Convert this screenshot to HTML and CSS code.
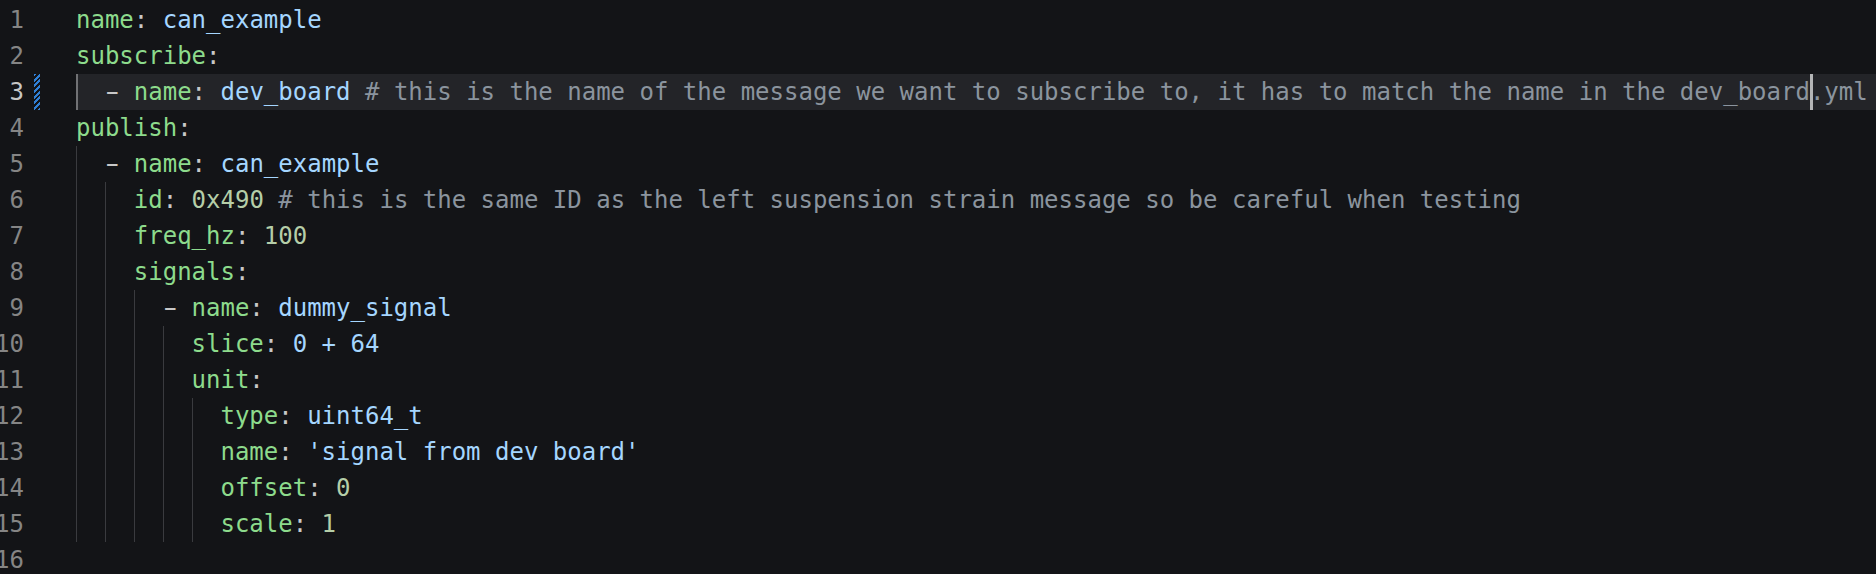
FILE: index.html
```html
<!DOCTYPE html>
<html>
<head>
<meta charset="utf-8">
<link rel="stylesheet" href="styles.css">
</head>
<body>
<div class="editor">
  <div class="line"><div class="gutter"><span class="ln">1</span></div><div class="code"><span class="k">name</span><span class="p">: </span><span class="s">can_example</span></div></div>
  <div class="line"><div class="gutter"><span class="ln">2</span></div><div class="code"><span class="k">subscribe</span><span class="p">:</span></div></div>
  <div class="line current"><div class="gutter"><span class="ln">3</span><span class="dirty"></span></div><div class="code"><span class="g active"></span><span class="d">-</span><span class="p"> </span><span class="k">name</span><span class="p">: </span><span class="s">dev_board</span><span class="c"> # this is the name of the message we want to subscribe to, it has to match the name in the dev_board<span class="cursor"></span>.yml</span></div></div>
  <div class="line"><div class="gutter"><span class="ln">4</span></div><div class="code"><span class="k">publish</span><span class="p">:</span></div></div>
  <div class="line"><div class="gutter"><span class="ln">5</span></div><div class="code"><span class="g"></span><span class="d">-</span><span class="p"> </span><span class="k">name</span><span class="p">: </span><span class="s">can_example</span></div></div>
  <div class="line"><div class="gutter"><span class="ln">6</span></div><div class="code"><span class="g"></span><span class="g"></span><span class="k">id</span><span class="p">: </span><span class="n">0x490</span><span class="c"> # this is the same ID as the left suspension strain message so be careful when testing</span></div></div>
  <div class="line"><div class="gutter"><span class="ln">7</span></div><div class="code"><span class="g"></span><span class="g"></span><span class="k">freq_hz</span><span class="p">: </span><span class="n">100</span></div></div>
  <div class="line"><div class="gutter"><span class="ln">8</span></div><div class="code"><span class="g"></span><span class="g"></span><span class="k">signals</span><span class="p">:</span></div></div>
  <div class="line"><div class="gutter"><span class="ln">9</span></div><div class="code"><span class="g"></span><span class="g"></span><span class="g"></span><span class="d">-</span><span class="p"> </span><span class="k">name</span><span class="p">: </span><span class="s">dummy_signal</span></div></div>
  <div class="line"><div class="gutter"><span class="ln">10</span></div><div class="code"><span class="g"></span><span class="g"></span><span class="g"></span><span class="g"></span><span class="k">slice</span><span class="p">: </span><span class="s">0 + 64</span></div></div>
  <div class="line"><div class="gutter"><span class="ln">11</span></div><div class="code"><span class="g"></span><span class="g"></span><span class="g"></span><span class="g"></span><span class="k">unit</span><span class="p">:</span></div></div>
  <div class="line"><div class="gutter"><span class="ln">12</span></div><div class="code"><span class="g"></span><span class="g"></span><span class="g"></span><span class="g"></span><span class="g"></span><span class="k">type</span><span class="p">: </span><span class="s">uint64_t</span></div></div>
  <div class="line"><div class="gutter"><span class="ln">13</span></div><div class="code"><span class="g"></span><span class="g"></span><span class="g"></span><span class="g"></span><span class="g"></span><span class="k">name</span><span class="p">: </span><span class="s">'signal from dev board'</span></div></div>
  <div class="line"><div class="gutter"><span class="ln">14</span></div><div class="code"><span class="g"></span><span class="g"></span><span class="g"></span><span class="g"></span><span class="g"></span><span class="k">offset</span><span class="p">: </span><span class="n">0</span></div></div>
  <div class="line"><div class="gutter"><span class="ln">15</span></div><div class="code"><span class="g"></span><span class="g"></span><span class="g"></span><span class="g"></span><span class="g"></span><span class="k">scale</span><span class="p">: </span><span class="n">1</span></div></div>
  <div class="line"><div class="gutter"><span class="ln">16</span></div><div class="code"></div></div>
</div>
</body>
</html>
```

FILE: styles.css
```css
html, body {
  margin: 0;
  padding: 0;
  background: #131417;
  height: 100%;
  overflow: hidden;
}

.editor {
  padding-top: 2px;
  font-family: "DejaVu Sans Mono", "Liberation Mono", monospace;
  font-size: 24px;
  color: #c9d1d9;
}

.line {
  display: flex;
  height: 36px;
  line-height: 36px;
}

.gutter {
  width: 76px;
  flex: none;
  display: flex;
  align-items: stretch;
}

.ln {
  width: 24px;
  text-align: right;
  color: #858585;
  white-space: nowrap;
  direction: rtl;
}

.current .ln {
  color: #c6c6c6;
}

.dirty {
  width: 6px;
  margin-left: 10px;
  background: repeating-linear-gradient(-45deg, #2f7fd6 0 2px, transparent 2px 4px);
}

.code {
  flex: 1;
  display: flex;
  white-space: pre;
  min-width: 0;
}

.current .code {
  background: #232428;
}

.g {
  width: 2ch;
  flex: none;
  height: 36px;
  box-sizing: border-box;
  border-left: 1px solid #3a3b3f;
}

.g.active {
  border-left: 2px solid #707174;
}

.k { color: #8ddb8c; }
.s { color: #a5d6ff; }
.n { color: #b5cea8; }
.c { color: #8b949e; }
.p { color: #c8c8c8; }

.d {
  display: inline-block;
  width: 1ch;
  color: #c8c8c8;
  transform: scaleX(1.7);
}

.cursor {
  display: inline-block;
  width: 3px;
  height: 36px;
  margin-right: -3px;
  vertical-align: top;
  background: #b4b5b6;
}
```
